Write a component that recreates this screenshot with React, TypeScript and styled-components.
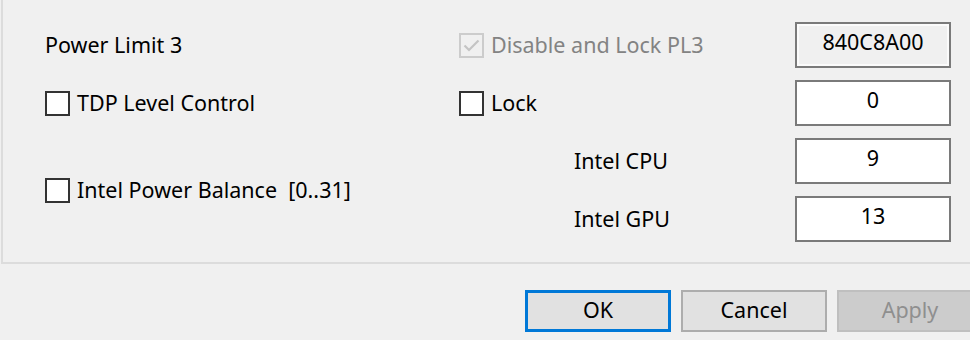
import styled, { createGlobalStyle } from "styled-components";

const GlobalStyle = createGlobalStyle`
  html, body {
    margin: 0;
    padding: 0;
    background: #f0f0f0;
    overflow: hidden;
  }
  body {
    font-family: "Segoe UI", "Noto Sans", sans-serif;
    font-size: 21.5px;
    color: #000;
  }
`;

const Dialog = styled.div`
  width: 995px;
  height: 340px;
  background: #f0f0f0;
`;

const GroupBox = styled.div`
  margin-left: 1px;
  border-left: 2px solid #dcdcdc;
  border-bottom: 2px solid #dcdcdc;
  padding: 22px 0 20px 42px;
  display: grid;
  grid-template-columns: 414px 336px 156px;
  grid-template-rows: repeat(4, 46px);
  row-gap: 12px;
`;

const Cell = styled.div<{ $row: string; $col: number; $indent?: number }>`
  grid-row: ${(p) => p.$row};
  grid-column: ${(p) => p.$col};
  display: flex;
  align-items: center;
  padding-left: ${(p) => p.$indent ?? 0}px;
`;

const Label = styled.span<{ $disabled?: boolean }>`
  color: ${(p) => (p.$disabled ? "#838383" : "#000")};
  white-space: pre;
  line-height: 1;
`;

const CheckRow = styled.label`
  display: flex;
  align-items: center;
  gap: 7px;
`;

const Box = styled.span<{ $disabled?: boolean }>`
  box-sizing: border-box;
  width: 25px;
  height: 25px;
  border: 2px solid ${(p) => (p.$disabled ? "#cccccc" : "#333333")};
  background: ${(p) => (p.$disabled ? "#f0f0f0" : "#fff")};
  display: flex;
  align-items: center;
  justify-content: center;
`;

const Field = styled.div<{ $readOnly?: boolean }>`
  box-sizing: border-box;
  width: 156px;
  height: 46px;
  border: 2px solid #7a7a7a;
  background: ${(p) => (p.$readOnly ? "#f0f0f0" : "#fff")};
  box-shadow: ${(p) => (p.$readOnly ? "inset 0 0 0 2px #fbfbfb" : "none")};
  text-align: center;
  padding-top: 7px;
  line-height: 1;
`;

const ButtonRow = styled.div`
  display: flex;
  justify-content: flex-end;
  gap: 10px;
  margin-top: 26px;
  padding-right: 12px;
`;

const Button = styled.button<{ $variant?: "default" | "disabled" }>`
  box-sizing: border-box;
  width: 146px;
  height: 42px;
  font: inherit;
  padding: 0 0 2px;
  line-height: 1;
  background: ${(p) => (p.$variant === "disabled" ? "#cccccc" : "#e1e1e1")};
  color: ${(p) => (p.$variant === "disabled" ? "#8f8f8f" : "#000")};
  border: ${(p) =>
    p.$variant === "default"
      ? "3px solid #0078d7"
      : p.$variant === "disabled"
      ? "2px solid #bfbfbf"
      : "2px solid #adadad"};
`;

const Check = ({ checked, disabled, label }: { checked?: boolean; disabled?: boolean; label: string }) => (
  <CheckRow>
    <Box $disabled={disabled}>
      {checked && (
        <svg width="17" height="13" viewBox="0 0 17 13">
          <path d="M1.5 6.5 L6 11 L15.5 1.5" fill="none" stroke={disabled ? "#c4c4c4" : "#333"} strokeWidth="2.2" />
        </svg>
      )}
    </Box>
    <Label $disabled={disabled}>{label}</Label>
  </CheckRow>
);

const App = () => {
  return (
    <Dialog>
      <GlobalStyle />
      <GroupBox>
        <Cell $row="1" $col={1}>
          <Label>Power Limit 3</Label>
        </Cell>
        <Cell $row="1" $col={2}>
          <Check checked disabled label="Disable and Lock PL3" />
        </Cell>
        <Cell $row="1" $col={3}>
          <Field $readOnly>840C8A00</Field>
        </Cell>

        <Cell $row="2" $col={1}>
          <Check label="TDP Level Control" />
        </Cell>
        <Cell $row="2" $col={2}>
          <Check label="Lock" />
        </Cell>
        <Cell $row="2" $col={3}>
          <Field>0</Field>
        </Cell>

        <Cell $row="3 / span 2" $col={1}>
          <Check label="Intel Power Balance  [0..31]" />
        </Cell>
        <Cell $row="3" $col={2} $indent={115}>
          <Label>Intel CPU</Label>
        </Cell>
        <Cell $row="3" $col={3}>
          <Field>9</Field>
        </Cell>
        <Cell $row="4" $col={2} $indent={115}>
          <Label>Intel GPU</Label>
        </Cell>
        <Cell $row="4" $col={3}>
          <Field>13</Field>
        </Cell>
      </GroupBox>
      <ButtonRow>
        <Button $variant="default">OK</Button>
        <Button>Cancel</Button>
        <Button $variant="disabled">Apply</Button>
      </ButtonRow>
    </Dialog>
  );
};

export default App;
